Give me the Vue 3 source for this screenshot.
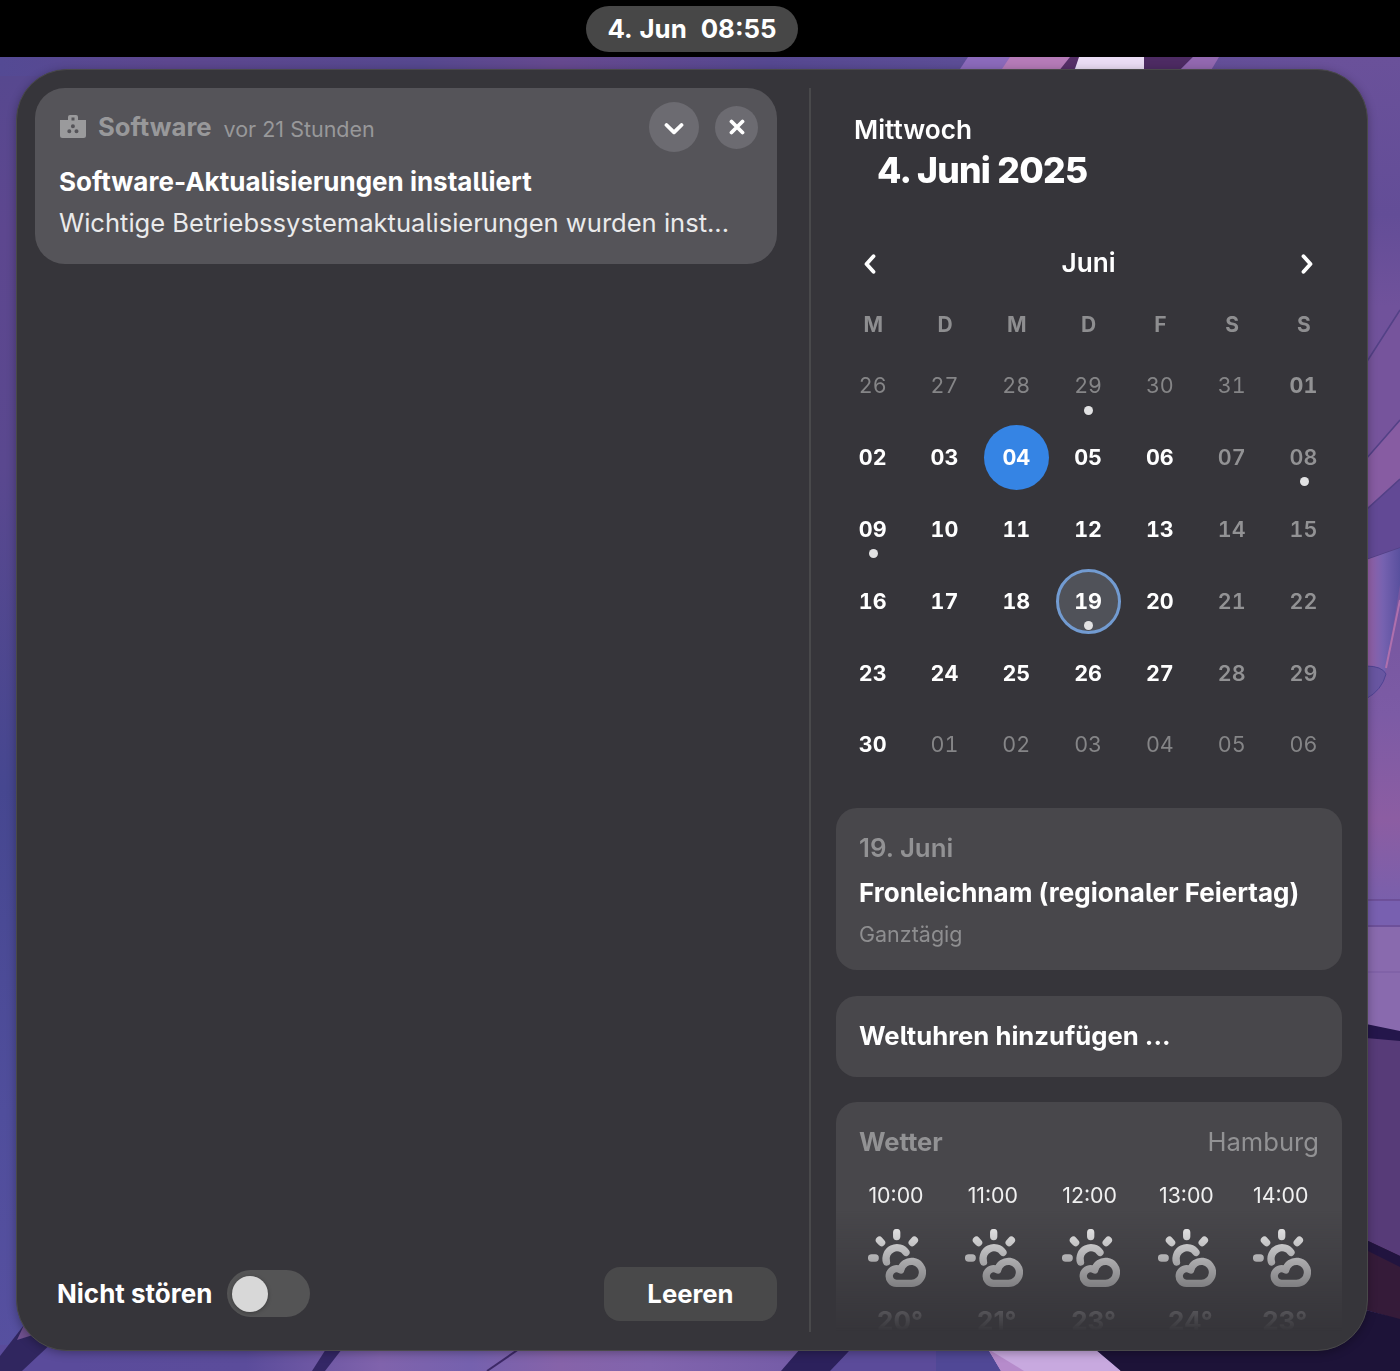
<script setup>
const weekdays = ['M', 'D', 'M', 'D', 'F', 'S', 'S']

const makeDay = (n, index) => {
  const inMonth = index >= 6 && index < 36
  const weekend = index % 7 > 4
  return {
    key: index,
    label: String(n).padStart(2, '0'),
    other: !inMonth,
    work: inMonth && !weekend,
    weekend: inMonth && weekend,
    first: index === 6,
    today: index === 9,
    selected: index === 24,
    event: [3, 13, 14, 24].includes(index),
  }
}

const days = Array.from({ length: 42 }, (_, i) => {
  if (i < 6) return makeDay(26 + i, i)
  if (i < 36) return makeDay(i - 5, i)
  return makeDay(i - 35, i)
})

const hours = [
  { time: '10:00', temp: '20°' },
  { time: '11:00', temp: '21°' },
  { time: '12:00', temp: '23°' },
  { time: '13:00', temp: '24°' },
  { time: '14:00', temp: '23°' },
]
</script>

<template>
  <div class="desktop">
    <svg class="wallpaper" viewBox="0 0 1400 1371" preserveAspectRatio="none" aria-hidden="true">
      <defs>
        <linearGradient id="leftEdge" x1="0" y1="0" x2="0" y2="1">
          <stop offset="0" stop-color="#57488f" />
          <stop offset="0.12" stop-color="#5d478f" />
          <stop offset="0.3" stop-color="#5a488f" />
          <stop offset="0.55" stop-color="#464790" />
          <stop offset="0.8" stop-color="#504e9c" />
          <stop offset="1" stop-color="#5750a0" />
        </linearGradient>
        <linearGradient id="topEdge" x1="0" y1="0" x2="1" y2="0">
          <stop offset="0" stop-color="#544a94" />
          <stop offset="0.12" stop-color="#5d478f" />
          <stop offset="0.3" stop-color="#56488f" />
          <stop offset="0.4" stop-color="#66498f" />
          <stop offset="0.55" stop-color="#564891" />
          <stop offset="0.68" stop-color="#5c4d96" />
          <stop offset="1" stop-color="#69509a" />
        </linearGradient>
        <linearGradient id="rightEdge" x1="0" y1="0" x2="0" y2="1">
          <stop offset="0" stop-color="#6a519a" />
          <stop offset="0.12" stop-color="#634d97" />
          <stop offset="0.19" stop-color="#70529b" />
          <stop offset="0.35" stop-color="#73529b" />
          <stop offset="0.5" stop-color="#7c5ba5" />
          <stop offset="0.58" stop-color="#8c5da2" />
          <stop offset="0.66" stop-color="#7460ae" />
          <stop offset="1" stop-color="#7460ae" />
        </linearGradient>
        <linearGradient id="bottomEdge" x1="0" y1="0" x2="1" y2="0">
          <stop offset="0" stop-color="#5a4b9b" />
          <stop offset="0.22" stop-color="#5b4c9b" />
          <stop offset="0.34" stop-color="#8063ac" />
          <stop offset="0.42" stop-color="#7561ae" />
          <stop offset="0.5" stop-color="#8663a9" />
          <stop offset="0.58" stop-color="#8164ad" />
          <stop offset="1" stop-color="#5a4b9b" />
        </linearGradient>
        <linearGradient id="column" x1="0" y1="0" x2="1" y2="0">
          <stop offset="0" stop-color="#9b62a9" />
          <stop offset="0.5" stop-color="#7662b0" />
          <stop offset="1" stop-color="#59509e" />
        </linearGradient>
      </defs>
      <rect width="1400" height="1371" fill="url(#topEdge)" />
      <rect y="76" width="60" height="1295" fill="url(#leftEdge)" />
      <rect x="1310" y="57" width="90" height="1314" fill="url(#rightEdge)" />

      <path d="M968 57H1072L1062 72H958Z" fill="#8b6abb" />
      <path d="M1010 57H1070L1060 72H1000Z" fill="#b57bb8" />
      <path d="M1070 57H1080L1073 72H1058Z" fill="#552f67" />
      <path d="M1079 57H1144V72H1074Z" fill="#eadcf4" />
      <path d="M1144 57H1193L1178 72H1144Z" fill="#4d2b63" />
      <path d="M1193 57H1219L1210 72H1178Z" fill="#9268b0" />

      <path d="M1366 363L1400 310V420L1366 460Z" fill="#76549c" />
      <path d="M1366 459L1400 420V480L1366 510Z" fill="#875ca2" />
      <path d="M1366 509L1400 479V548L1366 560Z" fill="#624995" />
      <path d="M1366 363L1400 310M1366 459L1400 420M1366 510L1400 479M1366 560L1400 548" stroke="#534186" stroke-width="1.5" fill="none" />
      <path d="M1366 560L1400 548V585L1386 668Q1382 690 1366 700Z" fill="url(#column)" />
      <path d="M1366 666Q1382 666 1386 674Q1382 690 1366 699" fill="#6856a1" stroke="#4e4393" />
      <path d="M1386 668L1400 600" stroke="#af70ad" stroke-width="2" />
      <rect x="1366" y="900" width="34" height="27" fill="#7860b0" />
      <rect x="1366" y="927" width="34" height="105" fill="#896aae" />
      <path d="M1366 900H1400M1366 926H1400" stroke="#6a4b93" stroke-width="1.5" />
      <path d="M1366 972H1400" stroke="#785ba1" />
      <path d="M1366 1024L1400 1031V1042H1366Z" fill="#24164b" />
      <path d="M1366 1038L1400 1041V1260H1366Z" fill="#573b78" />
      <path d="M1366 1240L1400 1256V1320L1366 1310Z" fill="#351b39" />
      <path d="M1366 1240L1400 1256V1267L1366 1250Z" fill="#21143f" />
      <path d="M1300 1300L1366 1310L1400 1319V1371H1080V1340H1300Z" fill="#1d1338" />

      <rect y="1345" width="1120" height="26" fill="url(#bottomEdge)" />
      <path d="M0 1356L24 1325L80 1340V1371H0Z" fill="#5a4b9b" />
      <path d="M0 1356L24 1325L55 1340L22 1371H0Z" fill="#30265f" />
      <path d="M24 1325L17 1340L36 1334Z" fill="#70518f" />
      <path d="M326 1349H342L325 1371H312Z" fill="#342766" />
      <path d="M519 1349L487 1371" stroke="#3d2967" stroke-width="2" />
      <path d="M800 1349H851L832 1371H781Z" fill="#2c215c" />
      <path d="M851 1349H1096L1120 1371H830Z" fill="#5b4b9a" />
      <path d="M936 1349H991L1001 1371H936Z" fill="#504896" />
      <path d="M988 1349H1095L1121 1371H1001Z" fill="#c8a9df" />
      <path d="M988 1349L1024 1371H1001Z" fill="#b68bcb" />
      <path d="M1095 1349L1121 1371H1140V1349Z" fill="#1d1338" />
    </svg>

    <header class="topbar">
      <button class="clock"><span>4. Jun</span><span>08:55</span></button>
    </header>

    <main class="popover">
      <section class="messages">
        <article class="notification">
          <div class="notification-head">
            <svg class="app-icon" width="26" height="24" viewBox="0 0 26 24">
              <path fill="#9a9a9c" fill-rule="evenodd" d="M10 0H16Q18 0 18 2V5H26V20.500Q26 23 23.500 23H2.500Q0 23 0 20.500V5H8V2Q8 0 10 0ZM11.500 2.500V5.500H14.500V2.500ZM12.900 9.200A2 2 0 1 0 12.900 13.200A2 2 0 1 0 12.900 9.200ZM9.300 14.200A2 2 0 1 0 9.300 18.200A2 2 0 1 0 9.300 14.200ZM16.500 14.200A2 2 0 1 0 16.500 18.200A2 2 0 1 0 16.500 14.200Z" />
            </svg>
            <span class="app-name">Software</span>
            <span class="age">vor 21 Stunden</span>
            <button class="round expand" aria-label="Ausklappen">
              <svg width="20" height="14" viewBox="0 0 20 14"><path d="M2.500 3L10 10.300L17.500 3" /></svg>
            </button>
            <button class="round close" aria-label="Schließen">
              <svg width="16" height="16" viewBox="0 0 16 16"><path d="M2.500 2.500L13.500 13.500M13.500 2.500L2.500 13.500" /></svg>
            </button>
          </div>
          <h3>Software-Aktualisierungen installiert</h3>
          <p>Wichtige Betriebssystemaktualisierungen wurden inst...</p>
        </article>
        <footer class="controls">
          <span class="dnd">Nicht stören</span>
          <span class="switch"><i></i></span>
          <button class="clear">Leeren</button>
        </footer>
      </section>

      <div class="divider"></div>

      <section class="side">
        <div class="today-label">
          <div class="weekday">Mittwoch</div>
          <div class="date">4. Juni 2025</div>
        </div>
        <div class="month">
          <svg width="14" height="22" viewBox="0 0 14 22"><path d="M10.500 3.200L3.500 11L10.500 18.800" /></svg>
          <span>Juni</span>
          <svg width="14" height="22" viewBox="0 0 14 22"><path d="M3.500 3.200L10.500 11L3.500 18.800" /></svg>
        </div>
        <div class="calendar">
          <div v-for="(d, i) in weekdays" :key="'w' + i" class="head">{{ d }}</div>
          <div
            v-for="d in days"
            :key="d.key"
            class="day"
            :class="{ other: d.other, work: d.work, weekend: d.weekend, first: d.first, today: d.today, selected: d.selected }"
          >
            <span>{{ d.label }}</span>
            <i v-if="d.event" class="dot"></i>
          </div>
        </div>
        <div class="card event">
          <div class="event-date">19. Juni</div>
          <div class="event-name">Fronleichnam (regionaler Feiertag)</div>
          <div class="event-time">Ganztägig</div>
        </div>
        <div class="card clocks">Weltuhren hinzufügen ...</div>
        <div class="card weather">
          <div class="weather-head">
            <b>Wetter</b>
            <span>Hamburg</span>
          </div>
          <div class="hours">
            <div v-for="h in hours" :key="h.time" class="hour">
              <span class="time">{{ h.time }}</span>
              <svg width="58" height="58" viewBox="0 0 58 58">
                <path d="M28.700 3.600V7.600M3.600 29H7.200M11.400 11.200L13.600 13.600M46.400 11.200L44.200 13.600" />
                <path d="M18.500 33A11 11 0 0 1 38 23.400" />
                <path d="M32.700 41A7.300 7.300 0 1 0 28.700 54.300H43.300A11 11 0 1 0 32.700 41Z" />
              </svg>
              <span class="temp">{{ h.temp }}</span>
            </div>
          </div>
        </div>
      </section>
    </main>
  </div>
</template>

<style>
body {
  margin: 0;
  background: #000;
}
</style>

<style scoped>
.desktop {
  position: relative;
  width: 1400px;
  height: 1371px;
  overflow: hidden;
  font-family: Inter, "Noto Sans", sans-serif;
  font-size: 26px;
  font-feature-settings: "cv05" 1;
  color: #fff;
}

.desktop * {
  box-sizing: border-box;
}

.wallpaper {
  position: absolute;
  inset: 0;
  width: 1400px;
  height: 1371px;
}

button {
  border: 0;
  padding: 0;
  font: inherit;
  font-feature-settings: "cv05" 1;
  color: inherit;
}

.topbar {
  position: relative;
  height: 57px;
  background: #000;
  padding: 6px 0 0 586px;
}

.clock {
  display: flex;
  align-items: center;
  justify-content: center;
  gap: 14px;
  width: 212px;
  height: 46px;
  padding-bottom: 2px;
  border-radius: 23px;
  background: #474747;
  font-size: 25.800px;
  font-weight: 700;
  word-spacing: 1.500px;
}

.popover {
  position: relative;
  display: flex;
  width: 1352px;
  height: 1282px;
  margin: 12px 0 0 16px;
  padding: 18px 25px 18px 18px;
  border: 1px solid #49494a;
  border-radius: 51px;
  background: #36353a;
  box-shadow: 0 2px 10px rgba(0, 0, 0, 0.3);
}

.messages {
  display: flex;
  flex-direction: column;
  justify-content: space-between;
  width: 742px;
  padding-bottom: 11px;
}

.notification {
  height: 176px;
  padding: 14px 19px 0 24px;
  border-radius: 30px;
  background: #555459;
}

.notification-head {
  display: flex;
  align-items: center;
  height: 50px;
}

.app-icon {
  margin: 0 12px 0 1px;
}

.app-name {
  margin-top: -2px;
  font-size: 25.700px;
  font-weight: 700;
  color: #98989a;
}

.age {
  margin: 3px 0 0 12px;
  font-size: 21.500px;
  color: #98989a;
}

.round {
  display: flex;
  align-items: center;
  justify-content: center;
  border-radius: 50%;
  background: #6c6b71;
}

.round svg,
.month svg {
  fill: none;
  stroke: #fff;
  stroke-width: 3.800;
  stroke-linecap: round;
  stroke-linejoin: round;
}

.expand {
  width: 50px;
  height: 50px;
  margin-left: auto;
}

.expand svg {
  margin-top: 3px;
}

.close {
  width: 43px;
  height: 43px;
  margin-left: 16px;
}

.notification h3 {
  margin: 13px 0 0;
  font-size: inherit;
  line-height: 34px;
  font-weight: 700;
  white-space: nowrap;
}

.notification p {
  margin: 7px 0 0;
  font-size: 25.550px;
  line-height: 34px;
  color: #eaeaeb;
  white-space: nowrap;
}

.controls {
  display: flex;
  align-items: center;
  height: 54px;
  padding-left: 22px;
  font-weight: 700;
}

.dnd {
  margin-top: -2px;
}

.switch {
  width: 83px;
  height: 47px;
  margin: -1px 0 0 15px;
  padding: 6px 5px;
  border-radius: 24px;
  background: #545455;
}

.switch i {
  display: block;
  width: 36px;
  height: 36px;
  border-radius: 50%;
  background: #d8d8d8;
  box-shadow: 0 1px 4px rgba(0, 0, 0, 0.3);
}

.clear {
  width: 173px;
  height: 54px;
  margin-left: auto;
  padding-bottom: 2px;
  border-radius: 16px;
  background: #49494a;
  font-size: 25.700px;
}

.divider {
  width: 2px;
  margin-left: 32px;
  background: #49494b;
}

.side {
  width: 506px;
  height: 1262px;
  margin: 0 0 -18px 25px;
  overflow: hidden;
  mask-image: linear-gradient(to bottom, #000 1122px, transparent 1243px);
}

.today-label {
  height: 141px;
  padding: 25px 0 0 18px;
}

.weekday {
  line-height: 34px;
  font-size: 26.200px;
  font-weight: 600;
}

.date {
  padding-left: 23px;
  font-size: 35.500px;
  line-height: 47px;
  font-weight: 800;
  letter-spacing: -0.700px;
}

.month {
  display: flex;
  align-items: center;
  justify-content: space-between;
  height: 69px;
  padding: 0 28px 0 27px;
  font-size: 26.200px;
  font-weight: 600;
}

.month span {
  margin-top: -2px;
}

.calendar {
  display: grid;
  grid-template-columns: repeat(7, 71.800px);
  grid-auto-rows: 71.800px;
  grid-template-rows: 52px;
  padding-left: 1.300px;
  font-size: 21.500px;
}

.head {
  display: flex;
  align-items: center;
  justify-content: center;
  font-weight: 700;
  font-size: 21px;
  color: #8e8e90;
}

.day {
  position: relative;
  display: flex;
  align-items: center;
  justify-content: center;
  font-variant-numeric: tabular-nums;
}

.day span {
  display: flex;
  align-items: center;
  justify-content: center;
  width: 65px;
  height: 65px;
  padding: 0 1px 1px 0;
  border-radius: 50%;
}

.other {
  color: #858587;
}

.work {
  font-weight: 700;
}

.weekend {
  font-weight: 600;
  color: #929294;
}

.first {
  font-weight: 700;
}

.today span {
  background: #3584e4;
}

.selected span {
  border: 3px solid #729bd1;
  background: #505259;
}

.dot {
  position: absolute;
  left: 50%;
  top: 55.500px;
  width: 9px;
  height: 9px;
  margin-left: -4.200px;
  border-radius: 50%;
  background: #e2e2e3;
}

.card {
  padding: 0 23px;
  border-radius: 21px;
  background: #48474b;
}

.event {
  height: 162px;
  margin-top: 27px;
  padding-top: 23px;
}

.event-date {
  font-size: 25.800px;
  line-height: 34px;
  font-weight: 600;
  color: #929294;
}

.event-name {
  margin-top: 11px;
  line-height: 34px;
  font-weight: 700;
  white-space: nowrap;
}

.event-time {
  margin-top: 9px;
  font-size: 21.500px;
  line-height: 30px;
  color: #8e8e90;
}

.clocks {
  height: 81px;
  margin-top: 26px;
  font-size: 25.700px;
  line-height: 80px;
  font-weight: 700;
}

.weather {
  height: 260px;
  margin-top: 25px;
  padding-top: 22px;
}

.weather-head {
  display: flex;
  justify-content: space-between;
  font-size: 25.600px;
  line-height: 36px;
  color: #929294;
}

.hours {
  display: flex;
  gap: 38.800px;
  margin: 20px 0 0 9px;
}

.hour {
  display: flex;
  flex-direction: column;
  align-items: center;
  width: 58px;
}

.hour:last-child {
  margin-left: -2.500px;
}

.time {
  margin-left: -2px;
  font-size: 21.300px;
  line-height: 30px;
  color: #f0f0f0;
}

.hour svg {
  margin-top: 19px;
  fill: none;
  stroke: #fff;
  stroke-width: 7.300;
  stroke-linecap: round;
  stroke-linejoin: round;
}

.temp {
  margin: 24px 0 0 6px;
  line-height: 20px;
  font-weight: 700;
  color: #f0f0f0;
}
</style>
